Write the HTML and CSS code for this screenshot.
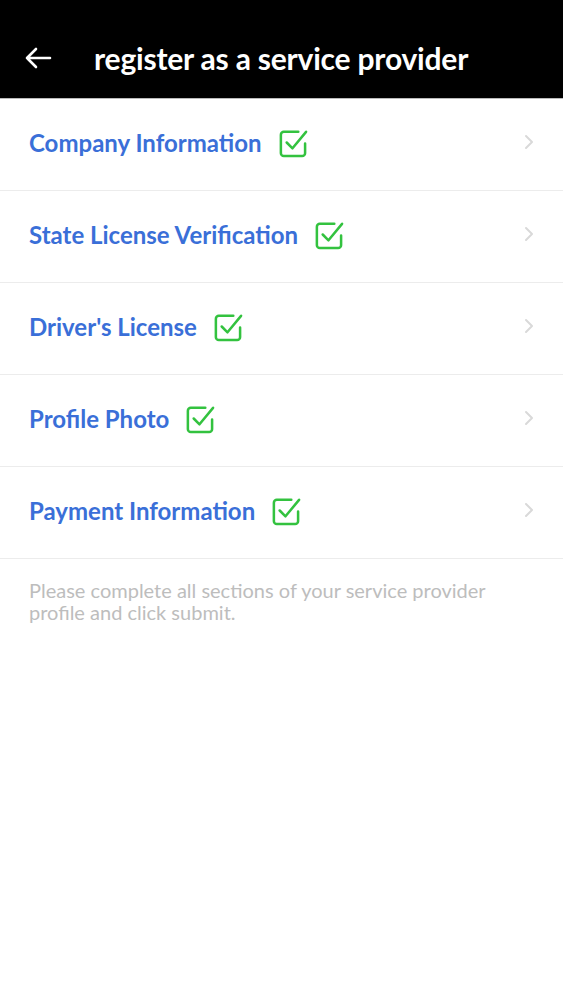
FILE: index.html
```html
<!DOCTYPE html>
<html lang="en">
<head>
<meta charset="UTF-8" />
<meta name="viewport" content="width=device-width, initial-scale=1" />
<title>Register as a service provider</title>
<link rel="stylesheet" href="styles.css">
</head>
<body>

<header class="topbar">
  <svg class="back" width="28" height="24" viewBox="0 0 28 24">
    <path d="M26 12H3M12 3l-9 9 9 9" fill="none" stroke="#fff" stroke-width="2.6" stroke-linecap="round" stroke-linejoin="round"/>
  </svg>
  <h1 class="title">register as a service provider</h1>
</header>

<ul class="sections">
  <li class="row">
    <span class="label">Company Information</span>
    <svg class="check" viewBox="0 0 32 32"><path d="M22 5H7a3 3 0 0 0-3 3v19a3 3 0 0 0 3 3h19a3 3 0 0 0 3-3V17" fill="none" stroke="#33c23f" stroke-width="2.6" stroke-linecap="round"/><path d="M10 16l6 6L30 5" fill="none" stroke="#33c23f" stroke-width="2.6" stroke-linecap="round" stroke-linejoin="round"/></svg>
    <svg class="chev" viewBox="0 0 10 16"><path d="M2 2l6 6-6 6" fill="none" stroke="#d9d9d9" stroke-width="2" stroke-linecap="round" stroke-linejoin="round"/></svg>
  </li>
  <li class="row">
    <span class="label">State License Verification</span>
    <svg class="check" viewBox="0 0 32 32"><path d="M22 5H7a3 3 0 0 0-3 3v19a3 3 0 0 0 3 3h19a3 3 0 0 0 3-3V17" fill="none" stroke="#33c23f" stroke-width="2.6" stroke-linecap="round"/><path d="M10 16l6 6L30 5" fill="none" stroke="#33c23f" stroke-width="2.6" stroke-linecap="round" stroke-linejoin="round"/></svg>
    <svg class="chev" viewBox="0 0 10 16"><path d="M2 2l6 6-6 6" fill="none" stroke="#d9d9d9" stroke-width="2" stroke-linecap="round" stroke-linejoin="round"/></svg>
  </li>
  <li class="row">
    <span class="label">Driver's License</span>
    <svg class="check" viewBox="0 0 32 32"><path d="M22 5H7a3 3 0 0 0-3 3v19a3 3 0 0 0 3 3h19a3 3 0 0 0 3-3V17" fill="none" stroke="#33c23f" stroke-width="2.6" stroke-linecap="round"/><path d="M10 16l6 6L30 5" fill="none" stroke="#33c23f" stroke-width="2.6" stroke-linecap="round" stroke-linejoin="round"/></svg>
    <svg class="chev" viewBox="0 0 10 16"><path d="M2 2l6 6-6 6" fill="none" stroke="#d9d9d9" stroke-width="2" stroke-linecap="round" stroke-linejoin="round"/></svg>
  </li>
  <li class="row">
    <span class="label">Profile Photo</span>
    <svg class="check" viewBox="0 0 32 32"><path d="M22 5H7a3 3 0 0 0-3 3v19a3 3 0 0 0 3 3h19a3 3 0 0 0 3-3V17" fill="none" stroke="#33c23f" stroke-width="2.6" stroke-linecap="round"/><path d="M10 16l6 6L30 5" fill="none" stroke="#33c23f" stroke-width="2.6" stroke-linecap="round" stroke-linejoin="round"/></svg>
    <svg class="chev" viewBox="0 0 10 16"><path d="M2 2l6 6-6 6" fill="none" stroke="#d9d9d9" stroke-width="2" stroke-linecap="round" stroke-linejoin="round"/></svg>
  </li>
  <li class="row">
    <span class="label">Payment Information</span>
    <svg class="check" viewBox="0 0 32 32"><path d="M22 5H7a3 3 0 0 0-3 3v19a3 3 0 0 0 3 3h19a3 3 0 0 0 3-3V17" fill="none" stroke="#33c23f" stroke-width="2.6" stroke-linecap="round"/><path d="M10 16l6 6L30 5" fill="none" stroke="#33c23f" stroke-width="2.6" stroke-linecap="round" stroke-linejoin="round"/></svg>
    <svg class="chev" viewBox="0 0 10 16"><path d="M2 2l6 6-6 6" fill="none" stroke="#d9d9d9" stroke-width="2" stroke-linecap="round" stroke-linejoin="round"/></svg>
  </li>
</ul>

<p class="note">Please complete all sections of your service provider profile and click submit.</p>

</body>
</html>
```

FILE: styles.css
```css
/* Pantalla base */
html, body {
  margin: 0;
  background: #fff;
  font-family: Lato, "Open Sans", sans-serif;
}

/* Barra superior negra */
.topbar {
  display: flex;
  align-items: center;
  height: 99px;
  padding: 18px 0 0 24px;
  box-sizing: border-box;
  background: #000;
  border-bottom: 1px solid #bbb;
}

.back {
  flex: none;
}

.title {
  margin: 0 0 0 42px;
  color: #fff;
  font-size: 30px;
  font-weight: bold;
  letter-spacing: -0.2px;
}

/* Lista de secciones */
.sections {
  list-style: none;
  margin: 0;
  padding: 0;
}

.row {
  display: flex;
  align-items: center;
  height: 92px;
  padding: 0 29px 5px 29px;
  box-sizing: border-box;
  border-bottom: 1px solid #ececec;
}

.label {
  color: #3a6fd8;
  font-size: 24px;
  font-weight: bold;
}

.check {
  width: 31px;
  height: 31px;
  margin-left: 15px;
}

.chev {
  margin-left: auto;
  width: 10px;
  height: 16px;
}

.note {
  margin: 20px 40px 0 29px;
  color: #bdbdbd;
  font-size: 20px;
  line-height: 22px;
}
```
